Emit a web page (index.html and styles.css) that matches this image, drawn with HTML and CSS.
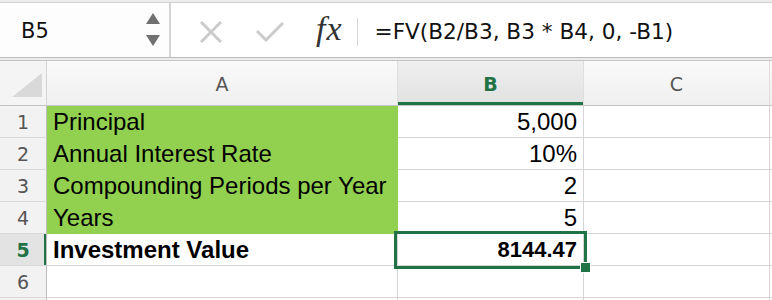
FILE: index.html
```html
<!DOCTYPE html>
<html lang="en">
<head>
    <meta charset="UTF-8">
    <title>Investment Value</title>
    <link rel="stylesheet" href="styles.css">
</head>
<body>
    <div class="formula-bar">
        <div class="name-box">
            <span class="name">B5</span>
            <svg class="spinner" width="14" height="34" viewBox="0 0 14 34">
                <polygon points="0,11 14,11 7,0" />
                <polygon points="0,22 14,22 7,33" />
            </svg>
        </div>
        <svg class="icon cancel" width="22" height="22" viewBox="0 0 22 22">
            <line x1="1" y1="1" x2="21" y2="21" />
            <line x1="21" y1="1" x2="1" y2="21" />
        </svg>
        <svg class="icon enter" width="28" height="20" viewBox="0 0 28 20">
            <polyline points="1,9 10,18 27,1" />
        </svg>
        <span class="fx">fx</span>
        <span class="divider"></span>
        <span class="formula">=FV(B2/B3, B3 * B4, 0, -B1)</span>
    </div>

    <div class="sheet">
        <div class="hd corner">
            <svg width="30" height="24" viewBox="0 0 30 24">
                <polygon points="0,24 30,24 30,0" />
            </svg>
        </div>
        <div class="hd col">A</div>
        <div class="hd col active">B</div>
        <div class="hd col">C</div>
        <div class="hd col"></div>

        <div class="rn">1</div>
        <div class="cell fill">Principal</div>
        <div class="cell num">5,000</div>
        <div class="cell"></div>
        <div class="cell"></div>

        <div class="rn">2</div>
        <div class="cell fill">Annual Interest Rate</div>
        <div class="cell num">10%</div>
        <div class="cell"></div>
        <div class="cell"></div>

        <div class="rn">3</div>
        <div class="cell fill">Compounding Periods per Year</div>
        <div class="cell num">2</div>
        <div class="cell"></div>
        <div class="cell"></div>

        <div class="rn">4</div>
        <div class="cell fill">Years</div>
        <div class="cell num">5</div>
        <div class="cell"></div>
        <div class="cell"></div>

        <div class="rn active">5</div>
        <div class="cell bold">Investment Value</div>
        <div class="cell num bold-num selected">
            8144.47
            <span class="selection"><span class="handle"></span></span>
        </div>
        <div class="cell"></div>
        <div class="cell"></div>

        <div class="rn">6</div>
        <div class="cell"></div>
        <div class="cell"></div>
        <div class="cell"></div>
        <div class="cell"></div>

        <div class="rn"></div>
        <div class="cell"></div>
        <div class="cell"></div>
        <div class="cell"></div>
        <div class="cell"></div>
    </div>
</body>
</html>
```

FILE: styles.css
```css
body {
    margin: 0;
    background: #ececec;
    font-family: "Liberation Sans", Arial, sans-serif;
    overflow: hidden;
}

.formula-bar {
    display: flex;
    align-items: center;
    height: 54px;
    margin-top: 2px;
    background: #fff;
    border-top: 1px solid #d2d2d2;
    border-bottom: 1px solid #bdbdbd;
}
.name-box {
    display: flex;
    align-items: center;
    justify-content: space-between;
    box-sizing: border-box;
    width: 171px;
    height: 100%;
    padding: 0 9px 0 21px;
    background: #fdfdfd;
    border-right: 2px solid #d4d4d4;
}
.name {
    font-family: "DejaVu Sans", sans-serif;
    font-size: 21px;
    color: #111;
    margin-top: 2px;
}
.spinner polygon {
    fill: #707070;
}
.icon {
    fill: none;
    stroke: #cbcbcb;
    stroke-width: 3;
}
.cancel {
    margin-left: 29px;
    margin-top: 4px;
}
.enter {
    margin-left: 34px;
    margin-top: 4px;
}
.fx {
    font-family: "Liberation Serif", serif;
    font-style: italic;
    font-size: 34px;
    letter-spacing: 1px;
    color: #333;
    margin-left: 32px;
    margin-top: -2px;
}
.divider {
    width: 1px;
    height: 28px;
    background: #d6d6d6;
    margin-left: 14px;
    margin-top: 4px;
}
.formula {
    font-family: "DejaVu Sans", sans-serif;
    font-size: 21.6px;
    color: #111;
    margin-left: 17px;
    margin-top: 2px;
    white-space: nowrap;
}

.sheet {
    display: grid;
    grid-template-columns: 47px 351px 186px 186px 1fr;
    grid-template-rows: 45px;
    grid-auto-rows: 32px;
    margin-top: 2px;
    background: #fff;
    border-top: 1px solid #c4c4c4;
}
.sheet > div {
    box-sizing: border-box;
    border-right: 1px solid #d4d4d4;
    border-bottom: 1px solid #d4d4d4;
}

.hd {
    background: linear-gradient(#fafafa, #efefef);
    border-bottom-color: #c4c4c4 !important;
    font-family: "DejaVu Sans", sans-serif;
    font-size: 19px;
    color: #555;
    display: flex;
    align-items: center;
    justify-content: center;
    padding-top: 1px;
}
.sheet > .hd.col {
    border-right-color: #dedede;
}
.hd.col.active {
    background: linear-gradient(#efefef, #e1e1e1);
    color: #217346;
    font-weight: bold;
    box-shadow: inset 0 -3px 0 #217346;
}
.corner {
    align-items: flex-end;
    justify-content: flex-end;
    padding: 0 4px 8px 0;
    background: #f4f4f4;
}
.corner polygon {
    fill: #d9d9d9;
}

.sheet > .rn {
    background: #f2f2f2;
    border-right: 1px solid #bdbdbd;
    border-bottom-color: #d8d8d8;
    font-family: "DejaVu Sans", sans-serif;
    font-size: 19px;
    color: #555;
    display: flex;
    align-items: center;
    justify-content: center;
    padding-top: 1px;
}
.sheet > .rn.active {
    background: #e3e3e3;
    color: #217346;
    font-weight: bold;
    box-shadow: inset -2px 0 0 #217346;
}

.cell {
    font-size: 24px;
    line-height: 31px;
    padding: 0 6px;
    white-space: nowrap;
    color: #000;
}
.sheet > .fill {
    background: #92d050;
    border-color: #92d050;
}
.num {
    text-align: right;
}
.bold {
    font-weight: bold;
}
.bold-num {
    font-weight: bold;
    font-size: 22px;
}
.selected {
    position: relative;
}
.selection {
    position: absolute;
    left: -4px;
    top: -3px;
    right: -4px;
    bottom: -4px;
    border: 3px solid #217346;
}
.handle {
    position: absolute;
    right: -7px;
    bottom: -7px;
    width: 9px;
    height: 9px;
    background: #217346;
    border: 1px solid #fff;
}
```
